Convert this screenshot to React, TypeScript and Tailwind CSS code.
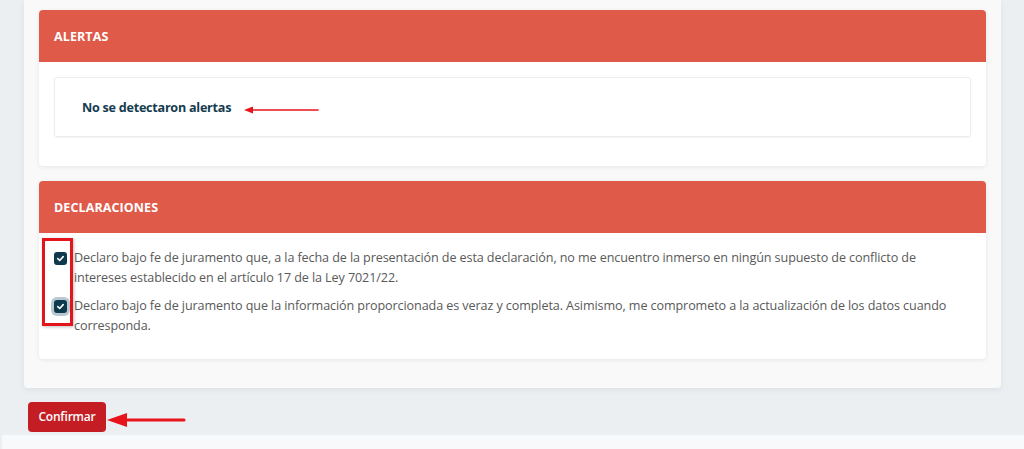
import type { ReactNode } from "react";

const font = { fontFamily: '"Open Sans", "Noto Sans", sans-serif' };

function SectionCard({ title, children }: { title: string; children: ReactNode }) {
  return (
    <section className="bg-white rounded-[4px] shadow-[0_1px_4px_rgba(0,0,0,0.08)] overflow-hidden">
      <header className="h-[52px] bg-[#e05a4a] flex items-center px-[15px] pt-[3px]">
        <h2 className="text-white font-bold text-[12.5px] tracking-[0.1px]">{title}</h2>
      </header>
      {children}
    </section>
  );
}

function CheckBox({ focused }: { focused?: boolean }) {
  return (
    <span
      className={`mt-[4px] shrink-0 w-[13px] h-[13px] rounded-[3px] bg-[#0f3a4e] flex items-center justify-center ${
        focused ? "ring-[3px] ring-[#b9c8d1]" : ""
      }`}
    >
      <svg width="9" height="9" viewBox="0 0 10 10" fill="none">
        <path d="M2 5.2 4.1 7.2 8 2.9" stroke="white" strokeWidth="1.8" strokeLinecap="round" strokeLinejoin="round" />
      </svg>
    </span>
  );
}

function Declaration({ focused, children }: { focused?: boolean; children: ReactNode }) {
  return (
    <label className="flex gap-[7px] items-start">
      <CheckBox focused={focused} />
      <p className="text-[12.6px] leading-[20px] tracking-[-0.1px] text-[#595959]">{children}</p>
    </label>
  );
}

// left-pointing annotation arrow
function Arrow({ x, y, length, thick }: { x: number; y: number; length: number; thick?: boolean }) {
  const head = thick ? 20 : 9;
  const half = thick ? 7 : 3.5;
  const stroke = thick ? 3 : 1.6;
  return (
    <svg
      className="absolute pointer-events-none"
      style={{ left: x, top: y - 10 }}
      width={length + 4}
      height={20}
      viewBox={`0 0 ${length + 4} 20`}
    >
      <line x1={head - 2} y1={10} x2={length} y2={10} stroke="#e8141b" strokeWidth={stroke} strokeLinecap="round" />
      <polygon points={`0,10 ${head},${10 - half} ${head},${10 + half}`} fill="#e8141b" />
    </svg>
  );
}

export default function App() {
  return (
    <div className="relative w-full h-[449px] overflow-hidden bg-[#eceff2] flex flex-col" style={font}>
      <main className="flex-1 flex flex-col pl-[24px] pr-[23px]">
        <div className="bg-[#f9f9f9] rounded-b-[4px] shadow-[0_2px_6px_rgba(0,0,0,0.06)] px-[15px] pt-[10px] pb-[29px] flex flex-col gap-[15px]">
          <SectionCard title="ALERTAS">
            <div className="px-[15px] pt-[15px] pb-[29px]">
              <div className="h-[60px] rounded-[3px] border border-[#ececec] shadow-[0_1px_2px_rgba(0,0,0,0.05)] flex items-center pl-[27px] pt-[2px]">
                <p className="text-[12.6px] tracking-[-0.25px] font-bold text-[#143c4e]">No se detectaron alertas</p>
              </div>
            </div>
          </SectionCard>

          <SectionCard title="DECLARACIONES">
            <div className="px-[15px] pt-[15px] pb-[23px] flex flex-col gap-[8px]">
              <Declaration>
                Declaro bajo fe de juramento que, a la fecha de la presentación de esta declaración, no me encuentro
                inmerso en ningún supuesto de conflicto de
                <br />
                intereses establecido en el artículo 17 de la Ley 7021/22.
              </Declaration>
              <Declaration focused>
                Declaro bajo fe de juramento que la información proporcionada es veraz y completa. Asimismo, me
                comprometo a la actualización de los datos cuando
                <br />
                corresponda.
              </Declaration>
            </div>
          </SectionCard>
        </div>

        <div className="pt-[14px] pl-[4px]">
          <button className="h-[30px] w-[78px] rounded-[4px] bg-[#c51d24] text-white text-[12px] tracking-[-0.2px] font-semibold">
            Confirmar
          </button>
        </div>
      </main>

      <footer className="h-[15px] ml-[2px] bg-[#f8f9fa] border-t border-[#edf0f2]" />

      {/* annotations */}
      <Arrow x={244} y={110} length={74} />
      <Arrow x={107} y={420} length={77} thick />
      <div className="absolute left-[42px] top-[238px] w-[31px] h-[88px] border-[3px] border-[#e3141b] shadow-[1px_1px_3px_rgba(0,0,0,0.25)] pointer-events-none" />
    </div>
  );
}
